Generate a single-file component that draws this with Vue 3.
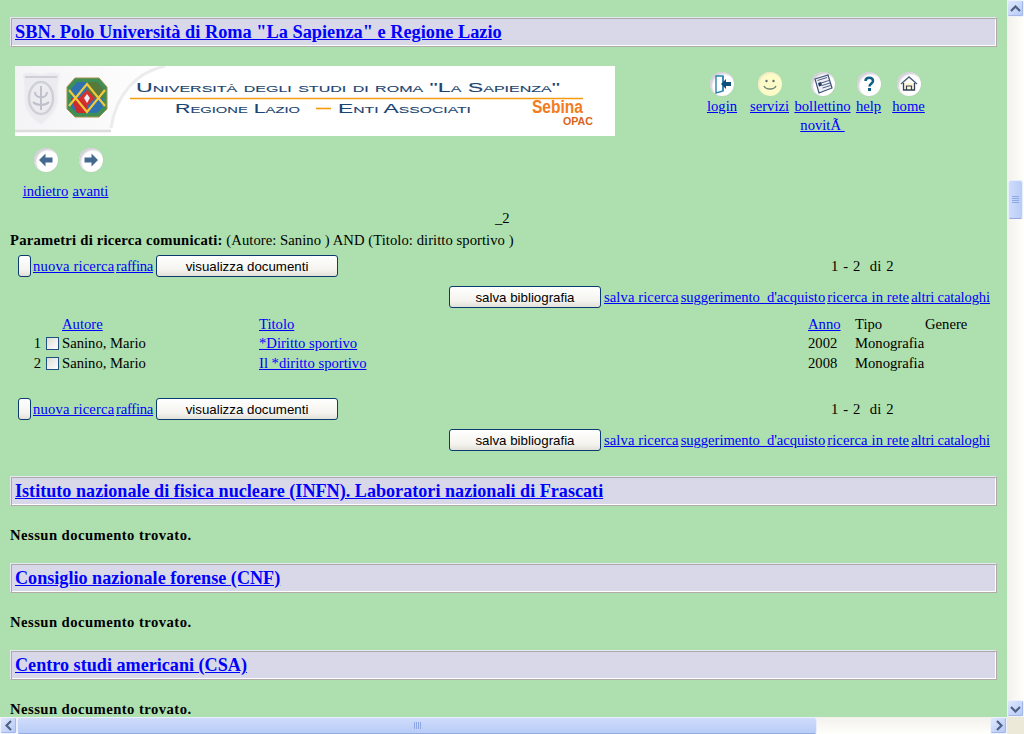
<script setup>
const tools = [
  { key: 'login', label: 'login' },
  { key: 'servizi', label: 'servizi' },
  { key: 'bollettino', label: 'bollettino novitÃ\u00a0' },
  { key: 'help', label: 'help' },
  { key: 'home', label: 'home' }
]
const results = [
  { n: 1, titolo: '*Diritto sportivo', anno: '2002' },
  { n: 2, titolo: 'Il *diritto sportivo', anno: '2008' }
]
const others = [
  'Istituto nazionale di fisica nucleare (INFN). Laboratori nazionali di Frascati',
  'Consiglio nazionale forense (CNF)',
  'Centro studi americani (CSA)'
]
</script>

<template>
  <div class="window">
    <div class="upper">
      <main class="page">
        <h2 class="section first"><a href="#">SBN. Polo Università di Roma "La Sapienza" e Regione Lazio</a></h2>

        <div class="banner-row">
          <svg class="logo" width="600" height="70" viewBox="0 0 600 70">
            <defs>
              <linearGradient id="side" x1="0" x2="1" y1="0" y2="0">
                <stop offset="0" stop-color="#ececf0" />
                <stop offset="1" stop-color="#ffffff" />
              </linearGradient>
            </defs>
            <rect width="600" height="70" fill="#fff" />
            <path d="M0 0H150C122 6 100 28 96 60V66H0Z" fill="url(#side)" opacity=".6" />
            <path d="M150 0C122 6 101 28 96 62" fill="none" stroke="#ececec" stroke-width="3" />
            <path d="M0 65H96" stroke="#dcdcdc" stroke-width="2.500" />
            <path d="M7 8L14 6L26 8L38 6L45 8L43 21V36C41 47 33 54 26 59C18 54 10 47 9 36V21Z" fill="#ebebf0" stroke="#f4f4f6" stroke-width="1.500" />
            <path d="M10 11H42" stroke="#d0d0d8" stroke-width="2" />
            <ellipse cx="26" cy="32" rx="12" ry="16" fill="none" stroke="#d0d0d8" stroke-width="2.500" />
            <path d="M26 20V44M20 26C20 33 32 33 32 26M18 36C22 40 30 40 34 36" fill="none" stroke="#c0c0ca" stroke-width="2" />
            <path d="M60 12H84L92 21V43L84 51H60L52 43V21Z" fill="#3d8f55" stroke="#a9924a" />
            <path d="M56 23L62 16H82L88 23V41L82 47H62L56 41Z" fill="#2f70ae" />
            <path d="M56 32L62 47H72V32Z" fill="#cf2b2c" />
            <path d="M72 16H82L88 23V32H72Z" fill="#57793a" />
            <path d="M54 24L72 46L90 24M54 40L72 18L90 40" fill="none" stroke="#f0c93c" stroke-width="2.200" />
            <path d="M72 24L80 32L72 40L64 32Z" fill="#d63030" />
            <path d="M72 28L75 32L72 37L69 32Z" fill="#eee" />
            <path d="M115 32.500H568" stroke="#f69a12" stroke-width="1.600" />
            <text x="121" y="26" textLength="424" lengthAdjust="spacingAndGlyphs" class="logo-text">Università degli studi di roma "La Sapienza"</text>
            <text x="160" y="47" textLength="125" lengthAdjust="spacingAndGlyphs" class="logo-text">Regione Lazio</text>
            <path d="M301 42.500H316" stroke="#f69a12" stroke-width="1.600" />
            <text x="323" y="47" textLength="133" lengthAdjust="spacingAndGlyphs" class="logo-text">Enti Associati</text>
            <text x="517" y="47" textLength="51" lengthAdjust="spacingAndGlyphs" class="logo-sebina">Sebina</text>
            <text x="548" y="59" textLength="30" lengthAdjust="spacingAndGlyphs" class="logo-opac">OPAC</text>
          </svg>

          <nav class="tools">
            <div v-for="t in tools" :key="t.key" class="tool" :class="'tool-' + t.key">
              <span class="disc" :class="{ sunny: t.key === 'servizi' }">
                <svg v-if="t.key === 'login'" width="22" height="22" viewBox="0 0 22 22">
                  <path d="M5 3H12V18L5 20Z" fill="#fff" stroke="#2a84ad" stroke-width="1.400" />
                  <path d="M12 3V18" stroke="#2a84ad" stroke-width="1.400" />
                  <path d="M20 9H15V6L10 11L15 16V13H20Z" fill="#0d4f79" />
                </svg>
                <svg v-else-if="t.key === 'servizi'" width="22" height="22" viewBox="0 0 22 22">
                  <circle cx="7.500" cy="8" r="1.200" fill="#5c7070" />
                  <circle cx="14.500" cy="8" r="1.200" fill="#5c7070" />
                  <path d="M5 13C7 17 15 17 17 13" fill="none" stroke="#6a8070" stroke-width="1.400" />
                </svg>
                <svg v-else-if="t.key === 'bollettino'" width="22" height="22" viewBox="0 0 22 22">
                  <path d="M3 6L16 2L20 15L7 20Z" fill="#eef0f4" stroke="#3b4f78" stroke-width="1.200" />
                  <path d="M5.500 7.500L15 4.500M9 10L17 7.500M10 12.500L18 10M10.500 15L18.500 12.500" stroke="#4d5f85" stroke-width="1" />
                  <path d="M6 10L9 9L10 12.500L7 13.500Z" fill="#23375f" />
                </svg>
                <svg v-else-if="t.key === 'help'" width="22" height="22" viewBox="0 0 22 22">
                  <path d="M7.500 8C7.500 3.500 15 3.500 15 8C15 10.500 11.500 10.500 11.500 13.500" fill="none" stroke="#0d5f86" stroke-width="2.500" />
                  <rect x="10" y="15" width="3" height="3" fill="#0d5f86" />
                </svg>
                <svg v-else width="22" height="22" viewBox="0 0 22 22">
                  <path d="M3 11L11 4L19 11" fill="none" stroke="#4f6078" stroke-width="1.400" />
                  <path d="M5.500 10V17H16.500V10" fill="#fff6d2" stroke="#33415c" stroke-width="1.300" />
                  <path d="M8.500 17V13H13.500V17" fill="none" stroke="#33415c" stroke-width="1.200" />
                </svg>
              </span>
              <a href="#">{{ t.label }}</a>
            </div>
          </nav>
        </div>

        <div class="history">
          <div class="hist-item hist-back">
            <span class="disc">
              <svg width="18" height="18" viewBox="0 0 18 18"><path d="M8.500 2.500L2 9L8.500 15.500V11.500H15.500V6.500H8.500Z" fill="#466a8f" /></svg>
            </span>
            <a href="#">indietro</a>
          </div>
          <div class="hist-item hist-next">
            <span class="disc">
              <svg width="18" height="18" viewBox="0 0 18 18"><path d="M9.500 2.500L16 9L9.500 15.500V11.500H2.500V6.500H9.500Z" fill="#466a8f" /></svg>
            </span>
            <a href="#">avanti</a>
          </div>
        </div>

        <div class="counter">_2</div>
        <p class="params"><b>Parametri di ricerca comunicati:</b> (Autore: Sanino ) AND (Titolo: diritto sportivo )</p>

        <template v-for="block in ['top', 'bottom']" :key="block">
          <div class="bar" :class="'bar-' + block">
            <button class="btn btn-empty" type="button"></button>
            <a href="#" class="l1">nuova ricerca</a>
            <a href="#" class="l2">raffina</a>
            <button class="btn btn-view" type="button">visualizza documenti</button>
            <span class="count">1 - 2 &nbsp;di 2</span>
          </div>
          <div class="bar2">
            <button class="btn btn-save" type="button">salva bibliografia</button>
            <a href="#" class="s1">salva ricerca</a>
            <a href="#" class="s2">suggerimento &nbsp;d'acquisto</a>
            <a href="#" class="s3">ricerca in rete</a>
            <a href="#" class="s4">altri cataloghi</a>
          </div>
          <div v-if="block === 'top'" class="results">
            <div class="row head">
              <span></span><span></span>
              <a href="#">Autore</a>
              <a href="#">Titolo</a>
              <a href="#">Anno</a>
              <span>Tipo</span>
              <span>Genere</span>
            </div>
            <div v-for="r in results" :key="r.n" class="row">
              <span class="num">{{ r.n }}</span>
              <span class="check"></span>
              <span>Sanino, Mario</span>
              <a href="#">{{ r.titolo }}</a>
              <span>{{ r.anno }}</span>
              <span>Monografia</span>
              <span></span>
            </div>
          </div>
        </template>

        <template v-for="o in others" :key="o">
          <h2 class="section"><a href="#">{{ o }}</a></h2>
          <p class="none">Nessun documento trovato.</p>
        </template>
      </main>

      <div class="vbar">
        <span class="sb-btn"><svg width="11" height="8" viewBox="0 0 11 8"><path d="M1 6L5.500 1.500L10 6" fill="none" stroke="#4d6185" stroke-width="2.200" /></svg></span>
        <div class="vtrack">
          <span class="vthumb"><i></i><i></i><i></i><i></i></span>
        </div>
        <span class="sb-btn"><svg width="11" height="8" viewBox="0 0 11 8"><path d="M1 2L5.500 6.500L10 2" fill="none" stroke="#4d6185" stroke-width="2.200" /></svg></span>
      </div>
    </div>

    <div class="hbar">
      <span class="sb-btn"><svg width="8" height="11" viewBox="0 0 8 11"><path d="M6 1L1.500 5.500L6 10" fill="none" stroke="#4d6185" stroke-width="2.200" /></svg></span>
      <div class="htrack">
        <span class="hthumb"><i></i><i></i><i></i><i></i></span>
      </div>
      <span class="sb-btn"><svg width="8" height="11" viewBox="0 0 8 11"><path d="M2 1L6.500 5.500L2 10" fill="none" stroke="#4d6185" stroke-width="2.200" /></svg></span>
      <span class="corner"></span>
    </div>
  </div>
</template>

<style scoped>
.window {
  width: 1024px;
  height: 734px;
  display: flex;
  flex-direction: column;
  overflow: hidden;
  font-family: "Liberation Serif", "Times New Roman", serif;
  font-size: 14.67px;
  line-height: 17px;
  color: #000;
  background: #aedfae;
}
.upper { flex: 1; min-height: 0; display: flex; }
.page {
  flex: 1;
  min-width: 0;
  height: 717px;
  overflow: hidden;
  padding: 17px 10px 0;
  box-sizing: border-box;
}
a { color: #0000ff; text-decoration: underline; }

.section {
  box-sizing: border-box;
  width: 987px;
  height: 30px;
  margin: 24px 0 0;
  padding: 0 4px;
  display: flex;
  align-items: center;
  font-size: 18.15px;
  font-weight: bold;
  line-height: 20px;
  background: #d8d8e8;
  border: 1px solid;
  border-color: #e8e8f2 #b0aaaa #b0aaaa #e8e8f2;
  box-shadow: inset 1px 1px 0 #aaa, inset -1px -1px 0 #fff;
}
.section.first { margin-top: 0; font-size: 18.33px; }

.banner-row { display: flex; margin: 19px 0 0 5px; height: 70px; }
.logo { display: block; flex: none; }
.logo-text {
  font: small-caps 13px "Liberation Sans", Arial, sans-serif;
  fill: #1b4470;
  stroke: #1b4470;
  stroke-width: .1px;
}
.logo-sebina { font: bold 18px "Liberation Sans", Arial, sans-serif; fill: #f47b20; }
.logo-opac { font: bold 10px "Liberation Sans", Arial, sans-serif; fill: #d9651d; }

.tools { display: flex; margin: 6px 0 0 93px; align-items: flex-start; line-height: 19px; }
.tool { display: flex; flex-direction: column; align-items: center; gap: 1px; text-align: center; flex: none; }
.tool-login { width: 28px; }
.tool-servizi { width: 37px; margin-left: 15px; }
.tool-bollettino { width: 55px; margin-left: 7px; }
.tool-help { width: 25px; margin-left: 6px; }
.tool-home { width: 33px; margin-left: 11px; }

.disc {
  width: 24px;
  height: 24px;
  border-radius: 50%;
  background: #fff;
  box-shadow: inset 2px 2px 2px #cfcfd6, 0 0 1px #b8b8c0;
  display: flex;
  align-items: center;
  justify-content: center;
  flex: none;
}
.disc.sunny { background: #fdfbc8; box-shadow: inset 1px 1px 2px #e8e6c0; }

.history { display: flex; margin: 12px 0 0 13px; }
.hist-item { display: flex; flex-direction: column; align-items: center; gap: 11px; white-space: nowrap; }
.hist-back { width: 45px; }
.hist-next { width: 35px; margin-left: 5px; }

.counter { margin: 10px 0 0 485px; height: 17px; line-height: 17px; }
.params { margin: 5px 0 0; letter-spacing: .05px; }
.params b { letter-spacing: .23px; }

.bar { display: flex; align-items: center; height: 24px; margin: 5px 0 0 8px; }
.bar-bottom { margin-top: 24px; }
.btn {
  box-sizing: border-box;
  height: 22px;
  padding: 0;
  border: 1px solid #0b3a6e;
  border-radius: 3px;
  background: linear-gradient(#ffffff, #f4f3ee 70%, #e2e0d8);
  font: 13.3px "Liberation Sans", Arial, sans-serif;
  color: #000;
}
.btn-empty { width: 13px; flex: none; }
.l1 { margin-left: 2px; width: 81px; white-space: nowrap; flex: none; letter-spacing: .15px; }
.l2 { margin-left: 2px; width: 37px; flex: none; letter-spacing: -.25px; }
.btn-view { width: 182px; margin-left: 3px; flex: none; }
.count { margin-left: 493px; letter-spacing: .35px; word-spacing: .5px; white-space: nowrap; }

.bar2 { display: flex; align-items: center; height: 22px; margin: 8px 0 0 439px; gap: 2px; white-space: nowrap; }
.btn-save { width: 152px; margin-right: 1px; flex: none; }
.s1 { letter-spacing: .08px; }
.s2 { letter-spacing: -.06px; }
.s3 { letter-spacing: .1px; }
.s4 { letter-spacing: -.15px; }

.results { margin-top: 7px; }
.row {
  display: grid;
  grid-template-columns: 36px 16px 197px 549px 47px 70px 60px;
  height: 20px;
  line-height: 20px;
  white-space: nowrap;
}
.row.head { height: 18px; line-height: 19px; }
.row > a { justify-self: start; height: 17px; }
.num { text-align: right; padding-right: 5px; box-sizing: border-box; }
.check {
  box-sizing: border-box;
  width: 13px;
  height: 13px;
  margin-top: 4px;
  border: 1px solid #1c5180;
  background: linear-gradient(135deg, #dcdcd7, #ffffff);
}

.none { margin: 21px 0 19px; font-weight: bold; letter-spacing: .45px; }
.section:has(+ .none) { margin-top: 0; }
.bar2 + .section { margin-top: 25px; }

.vbar {
  width: 17px;
  flex: none;
  display: flex;
  flex-direction: column;
  background: linear-gradient(90deg, #f3f1ec, #fefefb);
}
.vtrack { flex: 1; padding-top: 163px; }
.sb-btn {
  box-sizing: border-box;
  width: 17px;
  height: 17px;
  flex: none;
  display: flex;
  align-items: center;
  justify-content: center;
  background: linear-gradient(135deg, #dfe8fd, #b4c8f6);
  border: 1px solid #eef2fd;
  border-radius: 2px;
  box-shadow: inset -1px -1px 0 #a3b8e8;
}
.vthumb {
  box-sizing: border-box;
  display: flex;
  flex-direction: column;
  align-items: center;
  justify-content: center;
  gap: 1px;
  width: 15px;
  height: 39px;
  margin-left: 1px;
  background: linear-gradient(90deg, #cfdcfb, #b8ccf8);
  border: 1px solid #e8eefc;
  border-bottom-color: #94abe0;
  border-radius: 3px;
}
.vthumb i { display: block; width: 7px; height: 1px; background: #8ea8e6; }

.hbar { height: 17px; flex: none; display: flex; background: linear-gradient(#f3f1ec, #fefefb); }
.htrack { flex: 1; min-width: 0; }
.hthumb {
  box-sizing: border-box;
  display: flex;
  align-items: center;
  justify-content: center;
  gap: 1px;
  width: 800px;
  height: 17px;
  background: linear-gradient(#cfdcfb, #b8ccf8);
  border: 1px solid #e8eefc;
  border-bottom-color: #94abe0;
  border-radius: 3px;
}
.hthumb i { display: block; width: 1px; height: 7px; background: #8ea8e6; }
.corner { width: 17px; flex: none; background: #ece9d8; }
</style>
